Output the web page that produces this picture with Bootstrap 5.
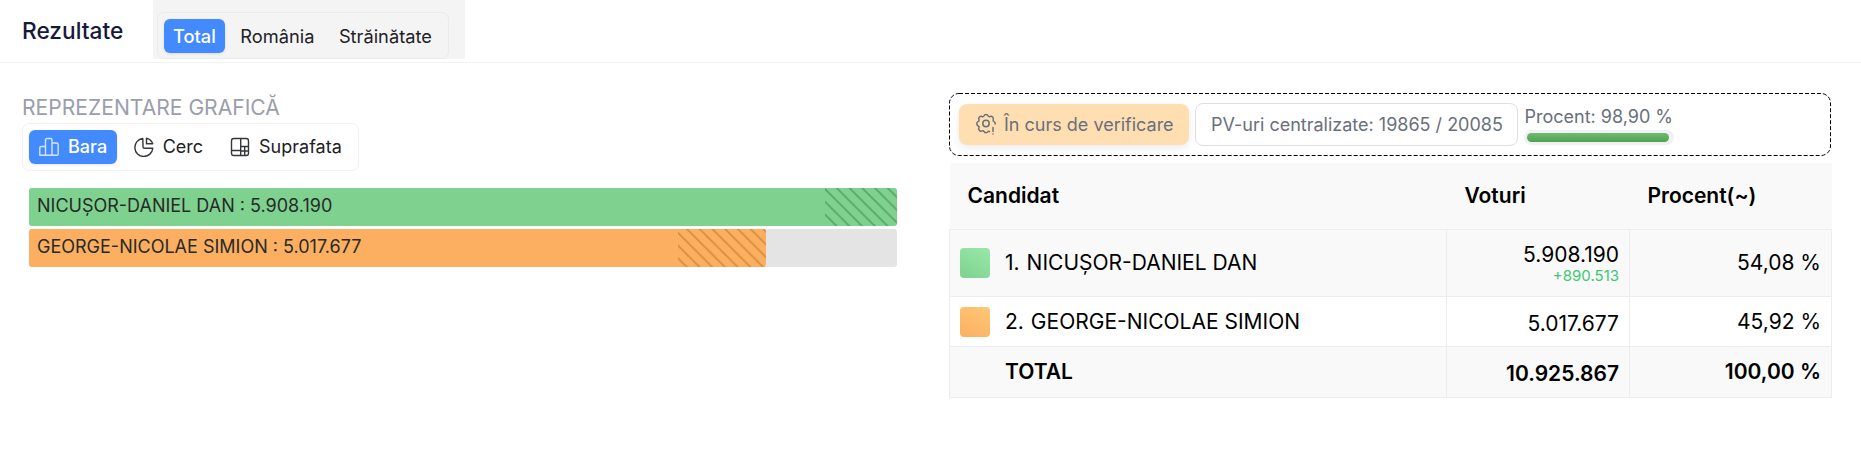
<!DOCTYPE html>
<html lang="ro">
<head>
<meta charset="utf-8">
<meta name="viewport" content="width=device-width, initial-scale=1">
<title>Rezultate</title>
<link href="https://cdn.jsdelivr.net/npm/bootstrap@5.3.0/dist/css/bootstrap.min.css" rel="stylesheet">
<style>
  body { font-family: Inter, sans-serif; background: #fff; color: #000; overflow: hidden; }
  .page-head { height: 63px; border-bottom: 1px solid #f2f2f2; padding-left: 22px; }
  .page-title { width: 131px; font-size: 22.700px; font-weight: 500; color: #16193a; line-height: 62px; }
  .region-wrap { width: 312px; height: 59px; background: #f4f4f4; padding: 12px 0 0 4px; }
  .seg-box { border: 1px solid #f1f1f3; border-radius: 7px; padding: 6px; width: max-content; height: 48px; }
  .region-wrap .seg-box { border-color: #ebebed; width: 292px; height: 47px; }
  .seg-btn { height: 34px; border: 0; border-radius: 6px; font-size: 18px; line-height: 32px; padding: 0 10px 1px; color: #212125; white-space: nowrap; background: none; font-weight: 400; }
  .seg-btn.active { background: #448aff; color: #fff; font-weight: 500; box-shadow: 0 1px 3px #0000001a; }
  .region-wrap .seg-btn { padding: 0 9px 1px; font-size: 18.250px; }
  .region-wrap .seg-btn + .seg-btn { padding-left: 15.500px; }
  .seg-btn svg { width: 20px; height: 20px; margin-right: 9px; }
  .view-box .seg-btn.active { padding-right: 9.500px; }
  .view-box .seg-btn + .seg-btn { padding-left: 17px; }
  .left-col { width: 875px; margin-left: 22px; padding-top: 30px; }
  .right-col { width: 882px; margin-left: 52px; padding-top: 30px; }
  .chart-label { font-size: 21.100px; line-height: 30px; color: #9a9eac; }
  .bars { margin: 17px 0 0 7px; width: 868px; }
  .vote-bar { height: 38px; background: #e4e4e4; margin-bottom: 3px; border-radius: 3px; }
  .fill { height: 38px; border-radius: 3px; font-size: 18px; line-height: 36px; color: #262b28; padding-left: 8px; white-space: nowrap; overflow: hidden; }
  .fill.c1 { background: #7fd18f; }
  .fill.c2 { background: #fcaf60; }
  .hatch { height: 38px; }
  .status { height: 63px; color: #69707a; font-size: 18px; padding-bottom: 1px; }
  .dash-frame { z-index: 1; pointer-events: none; }
  .chip { height: 43px; border-radius: 8px; white-space: nowrap; line-height: 41px; }
  .chip.check { height: 41px; width: 230px; background: #ffdfb2; padding-left: 17px; box-shadow: 0 3px 9px #00000014; }
  .chip.pv { width: 323px; border: 1px solid #dedfe1; padding-left: 15px; }
  .meter { width: 150px; height: 15px; background: #f1f1f1; border-radius: 8px; padding: 3px; }
  .meter-fill { height: 9px; border-radius: 5px; background: linear-gradient(#70bb73, #4ea253); }
  .results { width: 882px; table-layout: fixed; margin-top: 7px; font-size: 21px; line-height: 26px; border-collapse: collapse; }
  .results th { background: #f9f9f9; height: 66px; font-weight: 600; font-size: 21px; padding: 0 0 0 18px; }
  .results td { border: 1px solid #ededed; padding: 0 10px; vertical-align: middle; }
  .results .alt td { background: #f9f9f9; }
  .swatch { width: 30px; height: 30px; border-radius: 4px; margin-right: 15px; }
  .rank { margin-right: 7px; }
  .diff { font-size: 15px; line-height: 16px; color: #3fc873; }
</style>
</head>
<body>
<header class="page-head d-flex">
  <div class="page-title">Rezultate</div>
  <div class="region-wrap">
    <div class="seg-box d-flex">
      <button class="seg-btn active">Total</button>
      <button class="seg-btn">România</button>
      <button class="seg-btn">Străinătate</button>
    </div>
  </div>
</header>
<main class="d-flex">
  <section class="left-col">
    <div class="chart-label">REPREZENTARE GRAFICĂ</div>
    <div class="seg-box view-box d-flex">
      <button class="seg-btn active d-flex align-items-center">
        <svg viewBox="0 0 20 20" fill="none" stroke="#d5e5ff" stroke-width="1.4" stroke-linejoin="round"><path d="M.8 18.200V11q0-1.500 1.500-1.500h4.200v8.700zM6.500 18.200V3q0-1.500 1.500-1.500h3.500q1.500 0 1.500 1.500v15.200zM13 6h4.500q1.700 0 1.700 1.700v9q0 1.500-1.500 1.500H13M.8 18.200H18"/></svg>Bara</button>
      <button class="seg-btn d-flex align-items-center">
        <svg viewBox="0 0 20 20" fill="none" stroke="#33363b" stroke-width="1.4" stroke-linejoin="round"><path d="M8.800 1.500A9 9 0 1 0 18.800 11.200H10.500Q9 11.200 9 9.700z"/><path d="M12.500 1.200v5.600h6.200Q17.500 2.700 12.500 1.200z"/></svg>Cerc</button>
      <button class="seg-btn d-flex align-items-center">
        <svg viewBox="0 0 20 20" fill="none" stroke="#33363b" stroke-width="1.4"><rect x="1.500" y="1.500" width="17" height="17" rx="2.200"/><path d="M10.700 1.500v17M1.500 13.500h9.200M10.700 9.500h7.800M14.700 9.500v9M10.700 14h7.800"/></svg>Suprafata</button>
    </div>
    <div class="bars">
      <div class="vote-bar"><div class="fill c1 d-flex justify-content-between" style="width:100%"><span>NICUȘOR-DANIEL DAN : 5.908.190</span>
        <svg class="hatch" width="72"><defs><pattern id="hatch1" width="12.730" height="12.730" patternUnits="userSpaceOnUse"><path d="M-3-2L16 17M-3-14.730L16 4.270M-3 10.730L16 29.730" stroke="#57a568" stroke-width="1.700"/></pattern></defs><rect width="72" height="38" fill="url(#hatch1)"/></svg></div></div>
      <div class="vote-bar"><div class="fill c2 d-flex justify-content-between" style="width:84.9%"><span>GEORGE-NICOLAE SIMION : 5.017.677</span>
        <svg class="hatch" width="88"><defs><pattern id="hatch2" width="12.730" height="12.730" patternUnits="userSpaceOnUse"><path d="M-3 .800L16 19.800M-3-11.930L16 7.070M-3 13.530L16 32.530" stroke="#d58a3c" stroke-width="1.700"/></pattern></defs><rect width="88" height="38" fill="url(#hatch2)"/></svg></div></div>
    </div>
  </section>
  <section class="right-col">
    <div class="status position-relative d-flex align-items-center">
      <svg class="dash-frame position-absolute top-0 start-0" width="882" height="63"><rect x=".5" y=".5" width="881" height="62" rx="9.500" fill="none" stroke="#000" stroke-dasharray="4 2"/></svg>
      <div class="chip check d-flex align-items-center" style="margin-left:10px">
        <svg width="20" height="22" viewBox="0 0 20 22" class="me-2" fill="none" stroke="#69707a" stroke-width="1.500" stroke-linejoin="round" stroke-linecap="round"><path d="M13.500 18.600Q12.200 17.600 11.800 18.800Q11.400 19.800 10 19.800Q8.400 19.800 8 18.600Q7.400 17.200 6 17.900Q4.600 18.600 3.500 17.500Q2.200 16.200 2.900 14.900Q3.500 13.500 2.200 13Q.8 12.400.8 10.600Q.8 9.100 2 8.600Q3.500 8 2.900 6.600Q2.200 5.200 3.400 4Q4.700 2.900 6 3.500Q7.400 4.100 8 2.700Q8.500 1.400 10 1.400Q11.600 1.400 12.100 2.700Q12.700 4.100 14.100 3.500Q15.500 2.900 16.600 4Q17.800 5.300 17.200 6.600Q16.600 8 18 8.600Q19.200 9.100 19.200 10.600V11"/><circle cx="10" cy="10.500" r="3.200"/><path d="M17 14.500v4M17 21v.1"/></svg>În curs de verificare</div>
      <div class="chip pv" style="margin-left:6px">PV-uri centralizate: 19865 / 20085</div>
      <div style="margin-left:6px"><div style="line-height:27px;padding-left:.5px">Procent: 98,90 %</div><div class="meter"><div class="meter-fill" style="width:98.9%"></div></div></div>
    </div>
    <table class="results">
      <colgroup><col style="width:497px"><col style="width:183px"><col style="width:202px"></colgroup>
      <thead><tr><th>Candidat</th><th>Voturi</th><th>Procent(~)</th></tr></thead>
      <tbody>
        <tr class="alt" style="height:67px"><td><div class="d-flex align-items-center"><span class="swatch" style="background:linear-gradient(30deg,#7fd18f,#98e9a8)"></span><span class="rank">1.</span> NICUȘOR-DANIEL DAN</div></td><td class="text-end">5.908.190<div class="diff">+890.513</div></td><td class="text-end">54,08 %</td></tr>
        <tr style="height:50px"><td style="padding-top:2px"><div class="d-flex align-items-center"><span class="swatch" style="background:linear-gradient(30deg,#fcaf60,#ffc778)"></span><span class="rank">2.</span> GEORGE-NICOLAE SIMION</div></td><td class="text-end" style="padding-top:5px">5.017.677</td><td class="text-end" style="padding-top:2px">45,92 %</td></tr>
        <tr class="alt fw-semibold" style="height:51px"><td style="padding-left:55px">TOTAL</td><td class="text-end pt-1">10.925.867</td><td class="text-end">100,00 %</td></tr>
      </tbody>
    </table>
  </section>
</main>
<script src="https://cdn.jsdelivr.net/npm/bootstrap@5.3.0/dist/js/bootstrap.bundle.min.js"></script>
</body>
</html>
